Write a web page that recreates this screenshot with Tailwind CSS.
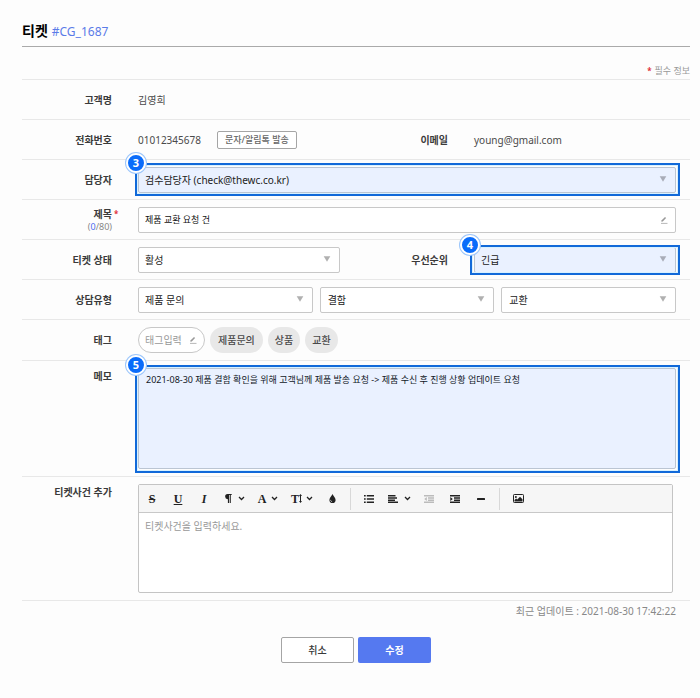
<!DOCTYPE html>
<html lang="ko">
<head>
    <meta charset="UTF-8">
    <meta name="viewport" content="width=device-width, initial-scale=1.0">
    <title>티켓 #CG_1687</title>
    <script src="https://cdn.jsdelivr.net/npm/@tailwindcss/browser@4"></script>
</head>
<body class="min-h-screen bg-[#fdfdfd] font-['Noto_Sans','Noto_Sans_CJK_KR',sans-serif] text-[10px] leading-4 text-[#4a4a4a]">
    <!-- Shared icons -->
    <svg class="hidden" xmlns="http://www.w3.org/2000/svg">
        <symbol id="caret" viewBox="0 0 8 6"><path d="M.7.3h6.600L4 5.800z" fill="currentColor"/></symbol>
        <symbol id="chevron" viewBox="0 0 7 5"><path d="M1 1l2.500 2.500L6 1" fill="none" stroke="currentColor" stroke-width="1.300"/></symbol>
        <symbol id="pencil" viewBox="0 0 8 8"><path d="M1.300 5.800l.4-1.500L5 1l1.100 1.100-3.300 3.300z" fill="currentColor"/><path d="M1 7.400h6.500" stroke="currentColor" stroke-width=".7"/></symbol>
    </svg>

    <main class="pt-5 pr-[10px] pb-8 pl-[22px]">
        <header class="flex items-baseline gap-1 border-b border-[#aaa] pb-[5px]">
            <h1 class="text-[14px] leading-[21px] font-bold text-black">티켓</h1>
            <a href="#" class="text-[12px] leading-4 text-[#5b7be8]">#CG_1687</a>
        </header>

        <p class="flex h-8 items-end justify-end gap-[3px] text-[9px] text-[#999]"><span class="text-[8px] font-bold text-[#e0303a]">*</span>필수 정보</p>

        <form>
            <!-- Customer -->
            <div class="grid min-h-10 grid-cols-[90px_1fr] items-center gap-x-[26px] border-t border-[#e8e8e8] pr-[14px]">
                <span class="text-right font-bold text-[#3a3a3a]">고객명</span>
                <span>김영희</span>
            </div>

            <!-- Contact -->
            <div class="grid min-h-10 grid-cols-[90px_1fr] items-center gap-x-[26px] border-t border-[#e8e8e8] pr-[14px]">
                <span class="text-right font-bold text-[#3a3a3a]">전화번호</span>
                <div class="grid grid-cols-[1fr_134px_1fr] items-center">
                    <div class="flex items-center gap-4 whitespace-nowrap">
                        <span>01012345678</span>
                        <button type="button" class="h-[18px] w-20 rounded-[2px] border border-[#a5a5a5] bg-white text-[9px] font-medium text-[#666]">문자/알림톡 발송</button>
                    </div>
                    <span class="pr-[26px] text-right font-bold text-[#3a3a3a]">이메일</span>
                    <span>young@gmail.com</span>
                </div>
            </div>

            <!-- Assignee -->
            <div class="grid min-h-10 grid-cols-[90px_1fr] items-center gap-x-[26px] border-t border-[#e8e8e8] pr-[14px]">
                <label for="assignee" class="text-right font-bold text-[#3a3a3a]">담당자</label>
                <div class="relative">
                    <select id="assignee" class="block h-[26px] w-full appearance-none rounded-[2px] border border-[#bbc5d3] bg-[#eaf1ff] px-[6px] text-[#222]">
                        <option>검수담당자 (check@thewc.co.kr)</option>
                    </select>
                    <svg class="pointer-events-none absolute top-[9px] right-[9px] h-[6px] w-2 text-[#a8acb8]"><use href="#caret"/></svg>
                    <span class="pointer-events-none absolute -top-1 -right-1 -bottom-[3px] -left-[3px] border-2 border-[#1169d9] shadow-[inset_0_0_0_1px_#d8f1ff]"></span>
                    <span class="absolute -top-[14px] -left-[12px] flex size-5 items-center justify-center rounded-full border-2 border-white bg-[#0a6cfa] text-[11px] font-bold text-white ring-1 ring-[#9cc6fb]">3</span>
                </div>
            </div>

            <!-- Subject -->
            <div class="grid min-h-10 grid-cols-[90px_1fr] items-center gap-x-[26px] border-t border-[#e8e8e8] pr-[14px]">
                <label for="subject" class="flex flex-col items-end font-bold text-[#3a3a3a]">
                    <span class="relative leading-[14px]">제목<span class="absolute top-0 left-full pl-[2px] text-[8px] text-[#e0303a]">*</span></span>
                    <span class="text-[9px] leading-3 font-normal text-[#888]">(<span class="text-[#4a6cf0]">0</span>/80)</span>
                </label>
                <div class="relative">
                    <input id="subject" type="text" value="제품 교환 요청 건" class="block h-[26px] w-full rounded-[2px] border border-[#c8c8c8] bg-white px-[6px] text-[9px] text-[#111]">
                    <svg class="pointer-events-none absolute top-[9px] right-[8px] size-2 text-[#999]"><use href="#pencil"/></svg>
                </div>
            </div>

            <!-- Status and priority -->
            <div class="grid min-h-10 grid-cols-[90px_1fr] items-center gap-x-[26px] border-t border-[#e8e8e8] pr-[14px]">
                <label for="status" class="text-right font-bold text-[#3a3a3a]">티켓 상태</label>
                <div class="grid grid-cols-[1fr_134px_1fr] items-center">
                    <div class="relative">
                        <select id="status" class="block h-[26px] w-full appearance-none rounded-[2px] border border-[#c8c8c8] bg-white px-[6px] text-[#222]">
                            <option>활성</option>
                        </select>
                        <svg class="pointer-events-none absolute top-[9px] right-[9px] h-[6px] w-2 text-[#b0b0b0]"><use href="#caret"/></svg>
                    </div>
                    <label for="priority" class="pr-[26px] text-right font-bold text-[#3a3a3a]">우선순위</label>
                    <div class="relative">
                        <select id="priority" class="block h-[26px] w-full appearance-none rounded-[2px] border border-[#bbc5d3] bg-[#eaf1ff] px-[6px] text-[#222]">
                            <option>긴급</option>
                        </select>
                        <svg class="pointer-events-none absolute top-[9px] right-[9px] h-[6px] w-2 text-[#a8acb8]"><use href="#caret"/></svg>
                        <span class="pointer-events-none absolute -inset-x-1 -inset-y-[2px] border-2 border-[#1169d9] shadow-[inset_0_0_0_1px_#d8f1ff]"></span>
                        <span class="absolute -top-[12px] -left-[14px] flex size-5 items-center justify-center rounded-full border-2 border-white bg-[#0a6cfa] text-[11px] font-bold text-white ring-1 ring-[#9cc6fb]">4</span>
                    </div>
                </div>
            </div>

            <!-- Consultation type -->
            <div class="grid min-h-10 grid-cols-[90px_1fr] items-center gap-x-[26px] border-t border-[#e8e8e8] pr-[14px]">
                <label for="type1" class="text-right font-bold text-[#3a3a3a]">상담유형</label>
                <div class="grid grid-cols-3 gap-[7px]">
                    <div class="relative">
                        <select id="type1" class="block h-[26px] w-full appearance-none rounded-[2px] border border-[#c8c8c8] bg-white px-[6px] text-[#222]">
                            <option>제품 문의</option>
                        </select>
                        <svg class="pointer-events-none absolute top-[9px] right-[9px] h-[6px] w-2 text-[#b0b0b0]"><use href="#caret"/></svg>
                    </div>
                    <div class="relative">
                        <select id="type2" aria-label="상담유형 중분류" class="block h-[26px] w-full appearance-none rounded-[2px] border border-[#c8c8c8] bg-white px-[7px] text-[#222]">
                            <option>결함</option>
                        </select>
                        <svg class="pointer-events-none absolute top-[9px] right-[9px] h-[6px] w-2 text-[#b0b0b0]"><use href="#caret"/></svg>
                    </div>
                    <div class="relative">
                        <select id="type3" aria-label="상담유형 소분류" class="block h-[26px] w-full appearance-none rounded-[2px] border border-[#c8c8c8] bg-white px-[7px] text-[#222]">
                            <option>교환</option>
                        </select>
                        <svg class="pointer-events-none absolute top-[9px] right-[9px] h-[6px] w-2 text-[#b0b0b0]"><use href="#caret"/></svg>
                    </div>
                </div>
            </div>

            <!-- Tags -->
            <div class="grid min-h-[41px] grid-cols-[90px_1fr] items-center gap-x-[26px] border-t border-[#e8e8e8] pr-[14px]">
                <label for="tag" class="text-right font-bold text-[#3a3a3a]">태그</label>
                <div class="flex gap-[5px]">
                    <div class="relative">
                        <input id="tag" type="text" placeholder="태그입력" class="block h-[26px] w-[67px] rounded-full border border-[#c8c8c8] bg-white pr-5 pl-[6px] placeholder:text-[#999]">
                        <svg class="pointer-events-none absolute top-[9px] right-[8px] size-2 text-[#999]"><use href="#pencil"/></svg>
                    </div>
                    <span class="flex h-[26px] items-center rounded-full bg-[#e8e8e8] px-2 font-medium">제품문의</span>
                    <span class="flex h-[26px] items-center rounded-full bg-[#e8e8e8] px-[7px] font-medium">상품</span>
                    <span class="flex h-[26px] items-center rounded-full bg-[#e8e8e8] px-[7px] font-medium">교환</span>
                </div>
            </div>

            <!-- Memo -->
            <div class="grid grid-cols-[90px_1fr] gap-x-[26px] border-t border-[#e8e8e8] py-[7px] pr-[14px]">
                <label for="memo" class="text-right font-bold text-[#3a3a3a]">메모</label>
                <div class="relative">
                    <textarea id="memo" class="block h-[101px] w-full resize-none rounded-[2px] border border-[#bbc5d3] bg-[#eaf1ff] px-[7px] py-[3px] text-[9px] text-[#111827]">2021-08-30 제품 결함 확인을 위해 고객님께 제품 발송 요청 -> 제품 수신 후 진행 상황 업데이트 요청</textarea>
                    <span class="pointer-events-none absolute -top-[3px] -right-1 -bottom-1 -left-[3px] border-2 border-[#1169d9] shadow-[inset_0_0_0_1px_#d8f1ff]"></span>
                    <span class="absolute -top-[13px] -left-[12px] flex size-5 items-center justify-center rounded-full border-2 border-white bg-[#0a6cfa] text-[11px] font-bold text-white ring-1 ring-[#9cc6fb]">5</span>
                </div>
            </div>

            <!-- Ticket event editor -->
            <div class="grid grid-cols-[90px_1fr] gap-x-[26px] border-y border-[#e8e8e8] py-[7px] pr-[17px]">
                <label for="event" class="text-right font-bold text-[#3a3a3a]">티켓사건 추가</label>
                <div class="rounded-[2px] border border-[#c4c4c4] bg-white">
                    <div class="flex h-7 items-center border-b border-[#c8c8c8] bg-[#f6f6f6] font-['Liberation_Serif',serif] text-[12px] font-bold text-[#222]">
                        <button type="button" aria-label="취소선" class="w-[26px] line-through">S</button>
                        <button type="button" aria-label="밑줄" class="w-[26px] underline">U</button>
                        <button type="button" aria-label="기울임" class="w-[26px] italic">I</button>
                        <button type="button" aria-label="문단 형식" class="flex w-[34px] items-center justify-center gap-[6px]">
                            <svg class="h-[9px] w-2" viewBox="0 0 8 9"><path d="M7.700 0v1.100h-.9V9H5.700V1.100H5V9H3.900V5.200A2.600 2.600 0 013.600 0z" fill="currentColor"/></svg>
                            <svg class="h-[5px] w-[7px]"><use href="#chevron"/></svg>
                        </button>
                        <button type="button" aria-label="글꼴" class="flex w-[34px] items-center justify-center gap-[5px]">
                            A<svg class="h-[5px] w-[7px]"><use href="#chevron"/></svg>
                        </button>
                        <button type="button" aria-label="글자 크기" class="flex w-[34px] items-center justify-center gap-1">
                            <span class="flex items-center">T<svg class="h-[9px] w-[3px]" viewBox="0 0 3 9"><path d="M1.500 0L3 2H2v5h1L1.500 9 0 7h1V2H0z" fill="currentColor"/></svg></span>
                            <svg class="h-[5px] w-[7px]"><use href="#chevron"/></svg>
                        </button>
                        <button type="button" aria-label="글자 색" class="flex w-[26px] justify-center">
                            <svg class="h-[9px] w-[7px]" viewBox="0 0 7 9"><path d="M3.500 0C4 1.900 6.600 3.400 6.600 5.900a3.100 3.100 0 01-6.200 0C.4 3.400 3 1.900 3.500 0z" fill="currentColor"/><path d="M1.600 5.900c0 1 .6 1.700 1.500 1.800" fill="none" stroke="#f6f6f6" stroke-width=".7"/></svg>
                        </button>
                        <span class="mx-[5px] h-[22px] w-px bg-[#d8d8d8]"></span>
                        <button type="button" aria-label="글머리 기호" class="flex w-[26px] justify-center">
                            <svg class="h-2 w-[10px]" viewBox="0 0 10 8" fill="currentColor"><path d="M0 0h1.700v1.600H0zM0 3.200h1.700v1.600H0zM0 6.400h1.700V8H0zM2.800.1H10v1.400H2.800zM2.800 3.300H10v1.400H2.800zM2.800 6.500H10v1.400H2.800z"/></svg>
                        </button>
                        <button type="button" aria-label="정렬" class="flex w-[34px] items-center justify-center gap-[6px]">
                            <svg class="h-2 w-[10px]" viewBox="0 0 10 8" fill="currentColor"><path d="M0 0h7.500v1.500H0zM0 2.200h9v1.500H0zM0 4.400h7v1.500H0zM0 6.500h10V8H0z"/></svg>
                            <svg class="h-[5px] w-[7px]"><use href="#chevron"/></svg>
                        </button>
                        <button type="button" aria-label="내어쓰기" disabled class="flex w-[26px] justify-center text-[#bbb]">
                            <svg class="h-2 w-[10px]" viewBox="0 0 10 8" fill="currentColor"><path d="M0 0h10v1.500H0zM4 2.200h6v1.500H4zM4 4.400h6v1.500H4zM0 6.500h10V8H0zM2.800 2v4L.3 4z"/></svg>
                        </button>
                        <button type="button" aria-label="들여쓰기" class="flex w-[26px] justify-center">
                            <svg class="h-2 w-[10px]" viewBox="0 0 10 8" fill="currentColor"><path d="M0 0h10v1.500H0zM4 2.200h6v1.500H4zM4 4.400h6v1.500H4zM0 6.500h10V8H0zM.3 2v4l2.500-2z"/></svg>
                        </button>
                        <button type="button" aria-label="가로줄" class="flex w-[26px] justify-center">
                            <svg class="h-[2px] w-2" viewBox="0 0 8 2"><rect width="8" height="2" rx=".5" fill="currentColor"/></svg>
                        </button>
                        <span class="mx-[5px] h-[22px] w-px bg-[#d8d8d8]"></span>
                        <button type="button" aria-label="이미지 삽입" class="flex w-[26px] justify-center">
                            <svg class="h-[9px] w-[11px]" viewBox="0 0 11 9"><rect x=".5" y=".5" width="10" height="8" rx=".8" fill="none" stroke="currentColor"/><circle cx="2.900" cy="2.900" r="1" fill="currentColor"/><path d="M1.500 7.500V6l1.600-1.500 1.200 1L7 2.700l2.500 2.500v2.300z" fill="currentColor"/></svg>
                        </button>
                    </div>
                    <textarea id="event" placeholder="티켓사건을 입력하세요." class="block h-[79px] w-full resize-none px-[6px] py-[5px] placeholder:text-[#999]"></textarea>
                </div>
            </div>

            <p class="pt-[2px] pr-[14px] text-right text-[#888]">최근 업데이트 : 2021-08-30 17:42:22</p>

            <div class="mt-[18px] flex justify-center gap-1">
                <button type="button" class="h-[26px] w-[73px] rounded-[2px] border border-[#a5a5a5] bg-white font-medium text-[#3a3a3a]">취소</button>
                <button type="submit" class="h-[26px] w-[73px] rounded-[2px] bg-[#5579f0] font-bold text-white">수정</button>
            </div>
        </form>
    </main>
</body>
</html>
